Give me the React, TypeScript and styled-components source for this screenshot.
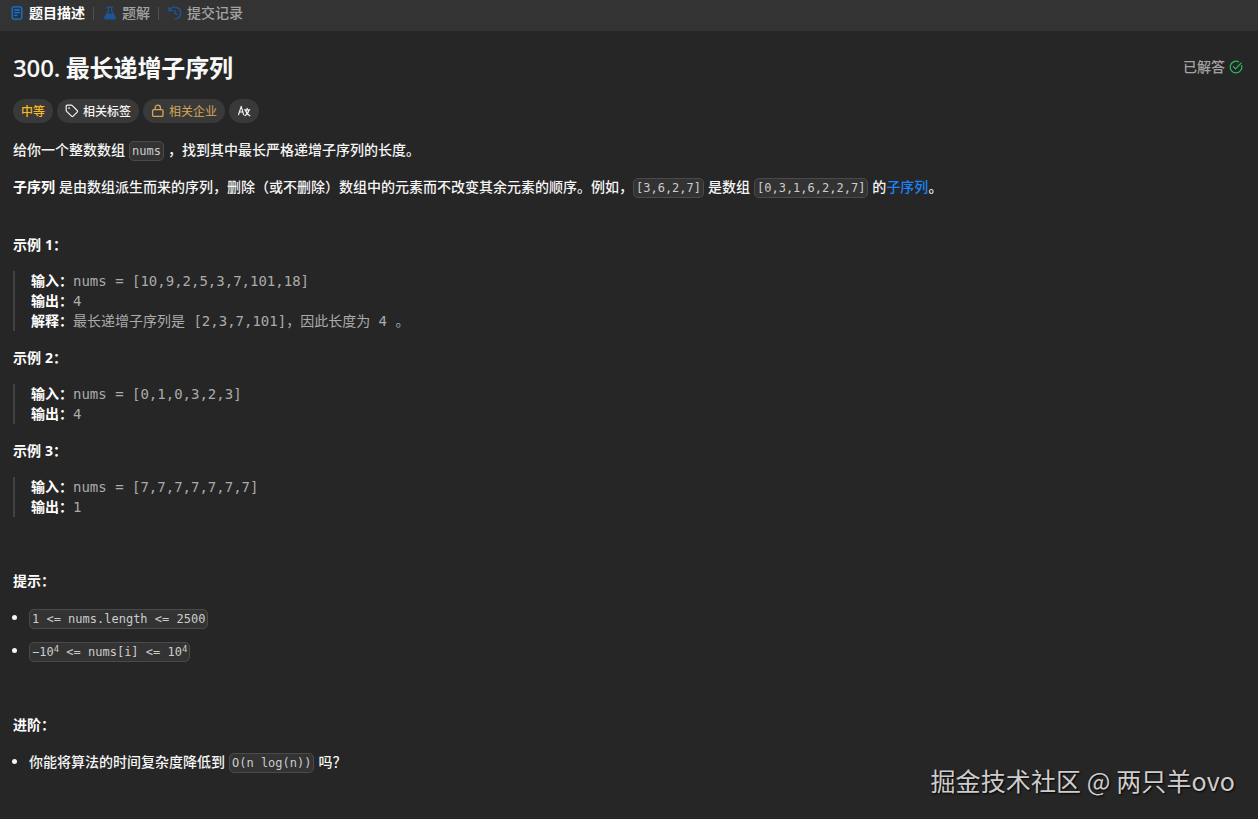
import React from 'react';
import styled, { createGlobalStyle } from 'styled-components';

const Global = createGlobalStyle`
  * { box-sizing: border-box; }
  body {
    margin: 0;
    background: #262626;
    color: #f5f5f5;
    font-family: 'Open Sans', 'Noto Sans CJK SC', sans-serif;
    font-size: 14px;
    font-weight: 500;
  }
`;

const Page = styled.div`
  position: relative;
  height: 819px;
  overflow: hidden;
  background: #262626;
`;

const TabBar = styled.nav`
  display: flex;
  align-items: center;
  height: 31px;
  padding: 0 0 5px 10px;
  background: #333333;
`;

const Tab = styled.div<{ $active?: boolean }>`
  display: flex;
  align-items: center;
  gap: 5px;
  height: 20px;
  line-height: 20px;
  font-weight: ${p => (p.$active ? 700 : 500)};
  color: ${p => (p.$active ? '#ffffff' : '#a3a3a3')};
  svg { opacity: ${p => (p.$active ? 1 : 0.6)}; }
`;

const Divider = styled.span`
  width: 1px;
  height: 13px;
  margin: 0 9px 0 8px;
  background: #505050;
`;

const Content = styled.main`
  padding: 21px 15px 0 13px;
`;

const Header = styled.header`
  display: flex;
  justify-content: space-between;
  align-items: center;
  height: 32px;
`;

const Title = styled.h1`
  margin: 0;
  font-size: 24px;
  line-height: 32px;
  font-weight: 600;
  letter-spacing: -0.1px;
  word-spacing: -0.8px;
  color: #f8f8f8;
`;

const Solved = styled.div`
  display: flex;
  align-items: center;
  gap: 4px;
  height: 20px;
  margin-bottom: 2px;
  line-height: 20px;
  color: #a3a3a3;
`;

const Tags = styled.div`
  display: flex;
  gap: 4px;
  margin: 15px 0 16px;
`;

const Tag = styled.span<{ $color?: string; $weight?: number }>`
  display: flex;
  align-items: center;
  gap: 4px;
  height: 24px;
  padding: 0 8px;
  border-radius: 12px;
  background: #393939;
  font-size: 12px;
  font-weight: ${p => p.$weight ?? 500};
  color: ${p => p.$color ?? '#f5f5f5'};
`;

const TagText = styled.span`
  padding-top: 2px;
  line-height: 22px;
`;

const Para = styled.p<{ $gap?: number }>`
  height: 21px;
  margin: 0 0 ${p => p.$gap ?? 16}px;
  line-height: 21px;
  white-space: nowrap;
  word-spacing: 0.35px;
`;

const Strong = styled.strong`
  font-weight: 700;
  color: #ffffff;
`;

const Heading = styled(Para)`
  font-weight: 700;
  color: #ffffff;
`;

const Code = styled.code`
  padding: 2px;
  border: 1px solid #4a4a4a;
  border-radius: 5px;
  background: #333333;
  font: 400 12px 'DejaVu Sans Mono', monospace;
  color: #cccccc;
  white-space: pre;
  word-spacing: 0;
  sup {
    font-size: 9px;
    line-height: 0;
    vertical-align: baseline;
    position: relative;
    top: -4px;
  }
`;

const Link = styled.a`
  color: #1a83f7;
`;

const Example = styled.pre<{ $gap?: number }>`
  margin: 0 0 ${p => p.$gap ?? 16}px;
  padding-left: 16px;
  border-left: 2px solid #424242;
  font: 400 14px/18px 'DejaVu Sans Mono', 'Noto Sans CJK SC', monospace;
  color: #ababab;
`;

const Row = styled.div`
  height: 20px;
`;

const Label = styled(Strong)`
  font-family: 'Noto Sans CJK SC', sans-serif;
`;

const List = styled.ul<{ $gap?: number }>`
  display: flex;
  flex-direction: column;
  gap: 12px;
  margin: 0 0 ${p => p.$gap ?? 0}px;
  padding: 0;
  list-style: none;
`;

const Item = styled.li`
  display: flex;
  height: 21px;
  line-height: 21px;
  white-space: pre;
  word-spacing: 0.35px;
  &::before {
    content: '';
    width: 5px;
    height: 5px;
    margin: 8px 12px 0 -1px;
    border-radius: 50%;
    background: #f5f5f5;
  }
`;

const Watermark = styled.div`
  position: absolute;
  right: 23px;
  bottom: 21px;
  font: 400 25px/36px 'Noto Sans CJK SC', sans-serif;
  letter-spacing: 0.1px;
  color: #cfcccc;
  text-shadow: 1px 1px 2px #000000;
  white-space: nowrap;
`;

const DocIcon = () => (
  <svg width="14" height="14" viewBox="0 0 14 14" fill="none" stroke="#0a78e6" strokeWidth="1.3" strokeLinecap="round">
    <rect x="2.2" y="0.9" width="9.6" height="12.2" rx="1.6" />
    <path d="M4.8 4h4.5M4.8 6.7h4.5M4.8 9.4h2" />
  </svg>
);

const FlaskIcon = () => (
  <svg width="14" height="14" viewBox="0 0 14 14">
    <path d="M4.3 1.2h5.4M5.3 1.5v3.7L1.7 11.3a1 1 0 0 0 .9 1.5h8.8a1 1 0 0 0 .9-1.5L8.7 5.2V1.5" fill="none" stroke="#0a6fdc" strokeWidth="1.2" strokeLinecap="round" strokeLinejoin="round" />
    <path d="M4.2 7.5h5.6l2.4 4.2-.6 1.1H2.4l-.6-1.1z" fill="#0a6fdc" />
  </svg>
);

const HistoryIcon = () => (
  <svg width="14" height="14" viewBox="0 0 14 14" fill="none" stroke="#0a6fdc" strokeWidth="1.4" strokeLinecap="round" strokeLinejoin="round">
    <path d="M1 1.5v3.2h3.2M1.3 4.5C2.4 2.4 4.4 1.1 6.9 1.1a5.9 5.9 0 1 1 0 11.8M6.9 4.2v3.1l2.1 1.1" />
  </svg>
);

const TagIcon = () => (
  <svg width="14" height="14" viewBox="0 0 14 14" fill="none" stroke="#f0f0f0" strokeWidth="1.2" strokeLinejoin="round">
    <path d="M1.2 2.2v4.1c0 .4.1.7.4 1l4.9 4.9c.5.5 1.2.5 1.7 0l4-4c.5-.5.5-1.2 0-1.7L7.3 1.6c-.3-.3-.6-.4-1-.4H2.2c-.6 0-1 .4-1 1z" />
    <circle cx="4.1" cy="4.1" r="0.6" fill="#f0f0f0" strokeWidth="0.6" />
  </svg>
);

const LockIcon = () => (
  <svg width="14" height="14" viewBox="0 0 14 14" fill="none" stroke="#d6a656" strokeWidth="1.3" strokeLinecap="round" strokeLinejoin="round">
    <rect x="1.6" y="5.6" width="10.4" height="6.8" rx="1.2" />
    <path d="M4.2 5.6V3.7a2.6 2.6 0 0 1 5.2 0v1.9" />
  </svg>
);

const TranslateIcon = () => (
  <svg width="14" height="14" viewBox="0 0 14 14" fill="none" stroke="#f5f5f5" strokeWidth="1.2" strokeLinecap="round" strokeLinejoin="round">
    <path d="M1.6 10.6 4.2 2.4l2.4 8.2M2.3 8h3.7M7.6 5.8h5.2M10.2 4.4v1.4M11.9 5.8c-.5 2.7-2 4.7-4 5.9M8.5 5.8c.5 2.7 2.2 4.7 4.3 5.9" />
  </svg>
);

const CheckIcon = () => (
  <svg width="14" height="14" viewBox="0 0 14 14" fill="none" stroke="#2cbb5d" strokeWidth="1.2" strokeLinecap="round" strokeLinejoin="round">
    <path d="M12.6 5.5A5.8 5.8 0 1 1 9.5 1.8M4.4 6.7l2.1 2.1 5.6-5.6" />
  </svg>
);

export default function App() {
  return (
    <Page>
      <Global />
      <TabBar>
        <Tab $active><DocIcon />题目描述</Tab>
        <Divider />
        <Tab><FlaskIcon />题解</Tab>
        <Divider />
        <Tab><HistoryIcon />提交记录</Tab>
      </TabBar>
      <Content>
        <Header>
          <Title>300. 最长递增子序列</Title>
          <Solved>已解答<CheckIcon /></Solved>
        </Header>
        <Tags>
          <Tag $color="#f5b81f"><TagText>中等</TagText></Tag>
          <Tag><TagIcon /><TagText>相关标签</TagText></Tag>
          <Tag $color="#d6a656" $weight={400}><LockIcon /><TagText>相关企业</TagText></Tag>
          <Tag><TranslateIcon /></Tag>
        </Tags>
        <Para>给你一个整数数组 <Code>nums</Code> ，找到其中最长严格递增子序列的长度。</Para>
        <Para $gap={37}>
          <Strong>子序列</Strong> 是由数组派生而来的序列，删除（或不删除）数组中的元素而不改变其余元素的顺序。例如，<Code>[3,6,2,7]</Code> 是数组 <Code>[0,3,1,6,2,2,7]</Code> 的<Link>子序列</Link>。
        </Para>
        <Heading>示例 1：</Heading>
        <Example>
          <Row><Label>输入：</Label>nums = [10,9,2,5,3,7,101,18]</Row>
          <Row><Label>输出：</Label>4</Row>
          <Row><Label>解释：</Label>最长递增子序列是 [2,3,7,101]，因此长度为 4 。</Row>
        </Example>
        <Heading>示例 2：</Heading>
        <Example>
          <Row><Label>输入：</Label>nums = [0,1,0,3,2,3]</Row>
          <Row><Label>输出：</Label>4</Row>
        </Example>
        <Heading>示例 3：</Heading>
        <Example $gap={53}>
          <Row><Label>输入：</Label>nums = [7,7,7,7,7,7,7]</Row>
          <Row><Label>输出：</Label>1</Row>
        </Example>
        <Heading>提示：</Heading>
        <List $gap={53}>
          <Item><span><Code>{'1 <= nums.length <= 2500'}</Code></span></Item>
          <Item><span><Code>−10<sup>4</sup>{' <= nums[i] <= 10'}<sup>4</sup></Code></span></Item>
        </List>
        <Heading>进阶：</Heading>
        <List>
          <Item><span>你能将算法的时间复杂度降低到 <Code>O(n log(n))</Code> 吗？</span></Item>
        </List>
      </Content>
      <Watermark>掘金技术社区 @ 两只羊ovo</Watermark>
    </Page>
  );
}
